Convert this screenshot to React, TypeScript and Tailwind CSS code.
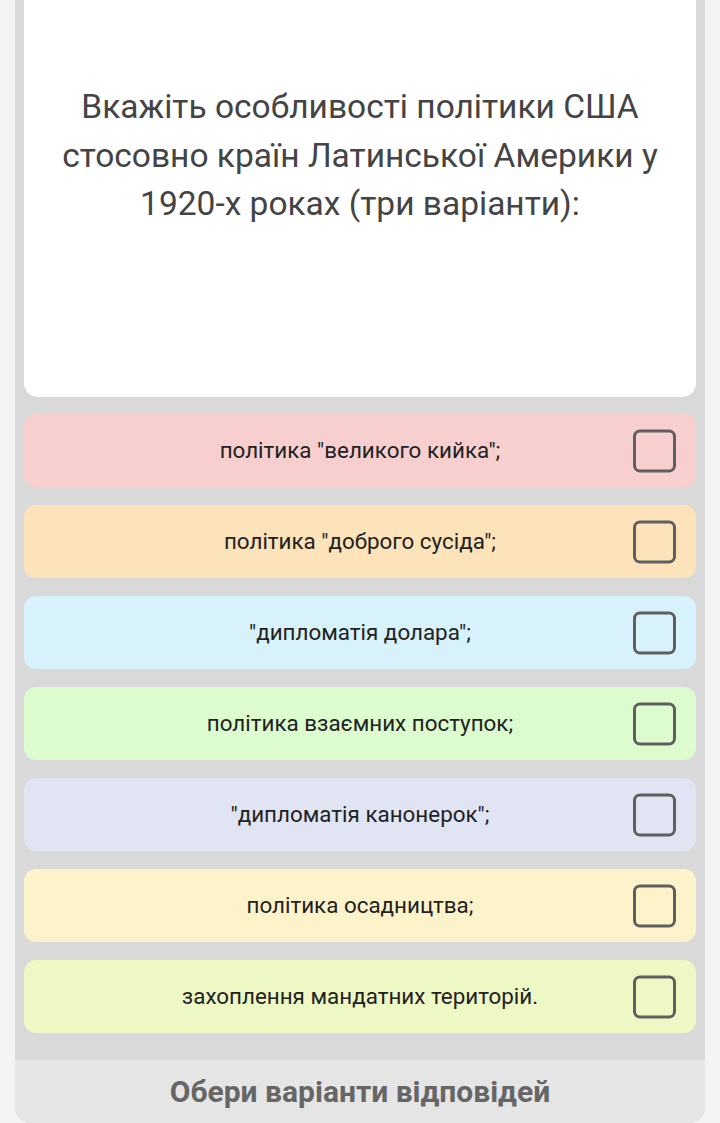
const options = [
  { text: 'політика "великого кийка";', bg: 'bg-[#f7cfce]' },
  { text: 'політика "доброго сусіда";', bg: 'bg-[#fce3b9]' },
  { text: '"дипломатія долара";', bg: 'bg-[#d7f2fa]' },
  { text: 'політика взаємних поступок;', bg: 'bg-[#dcfccf]' },
  { text: '"дипломатія канонерок";', bg: 'bg-[#e1e4f2]' },
  { text: 'політика осадництва;', bg: 'bg-[#fdf3cb]' },
  { text: 'захоплення мандатних територій.', bg: 'bg-[#eef8c4]' },
];

export default function App() {
  return (
    <div className="h-[1123px] overflow-hidden bg-[#f3f3f3] px-[15px] font-['Roboto',sans-serif]">
      <div className="overflow-hidden rounded-b-[16px] bg-[#d9d9d9]">
        <div className="px-[9px]">
          <div className="h-[397px] rounded-b-[14px] bg-white px-[24px] pt-[83px] text-center text-[33.5px] leading-[48.5px] text-[#444]">
            Вкажіть особливості політики США стосовно країн Латинської Америки у 1920-х роках (три варіанти):
          </div>
          <div className="flex flex-col gap-[18px] pb-[27px] pt-[17px]">
            {options.map((o) => (
              <Option key={o.text} text={o.text} bg={o.bg} />
            ))}
          </div>
        </div>
        <div className="flex h-[63px] items-center justify-center bg-[#e5e5e5] text-[30px] font-bold text-[#666]">
          Обери варіанти відповідей
        </div>
      </div>
    </div>
  );
}

function Option({ text, bg }: { text: string; bg: string }) {
  return (
    <div className={`relative flex h-[73px] items-center justify-center rounded-[12px] px-[80px] ${bg}`}>
      <span className="text-[22.4px] text-[#222]">{text}</span>
      <span className="absolute right-[20px] top-1/2 h-[43px] w-[43px] -translate-y-1/2 rounded-[7px] border-[3px] border-[#5f5f5f]" />
    </div>
  );
}
